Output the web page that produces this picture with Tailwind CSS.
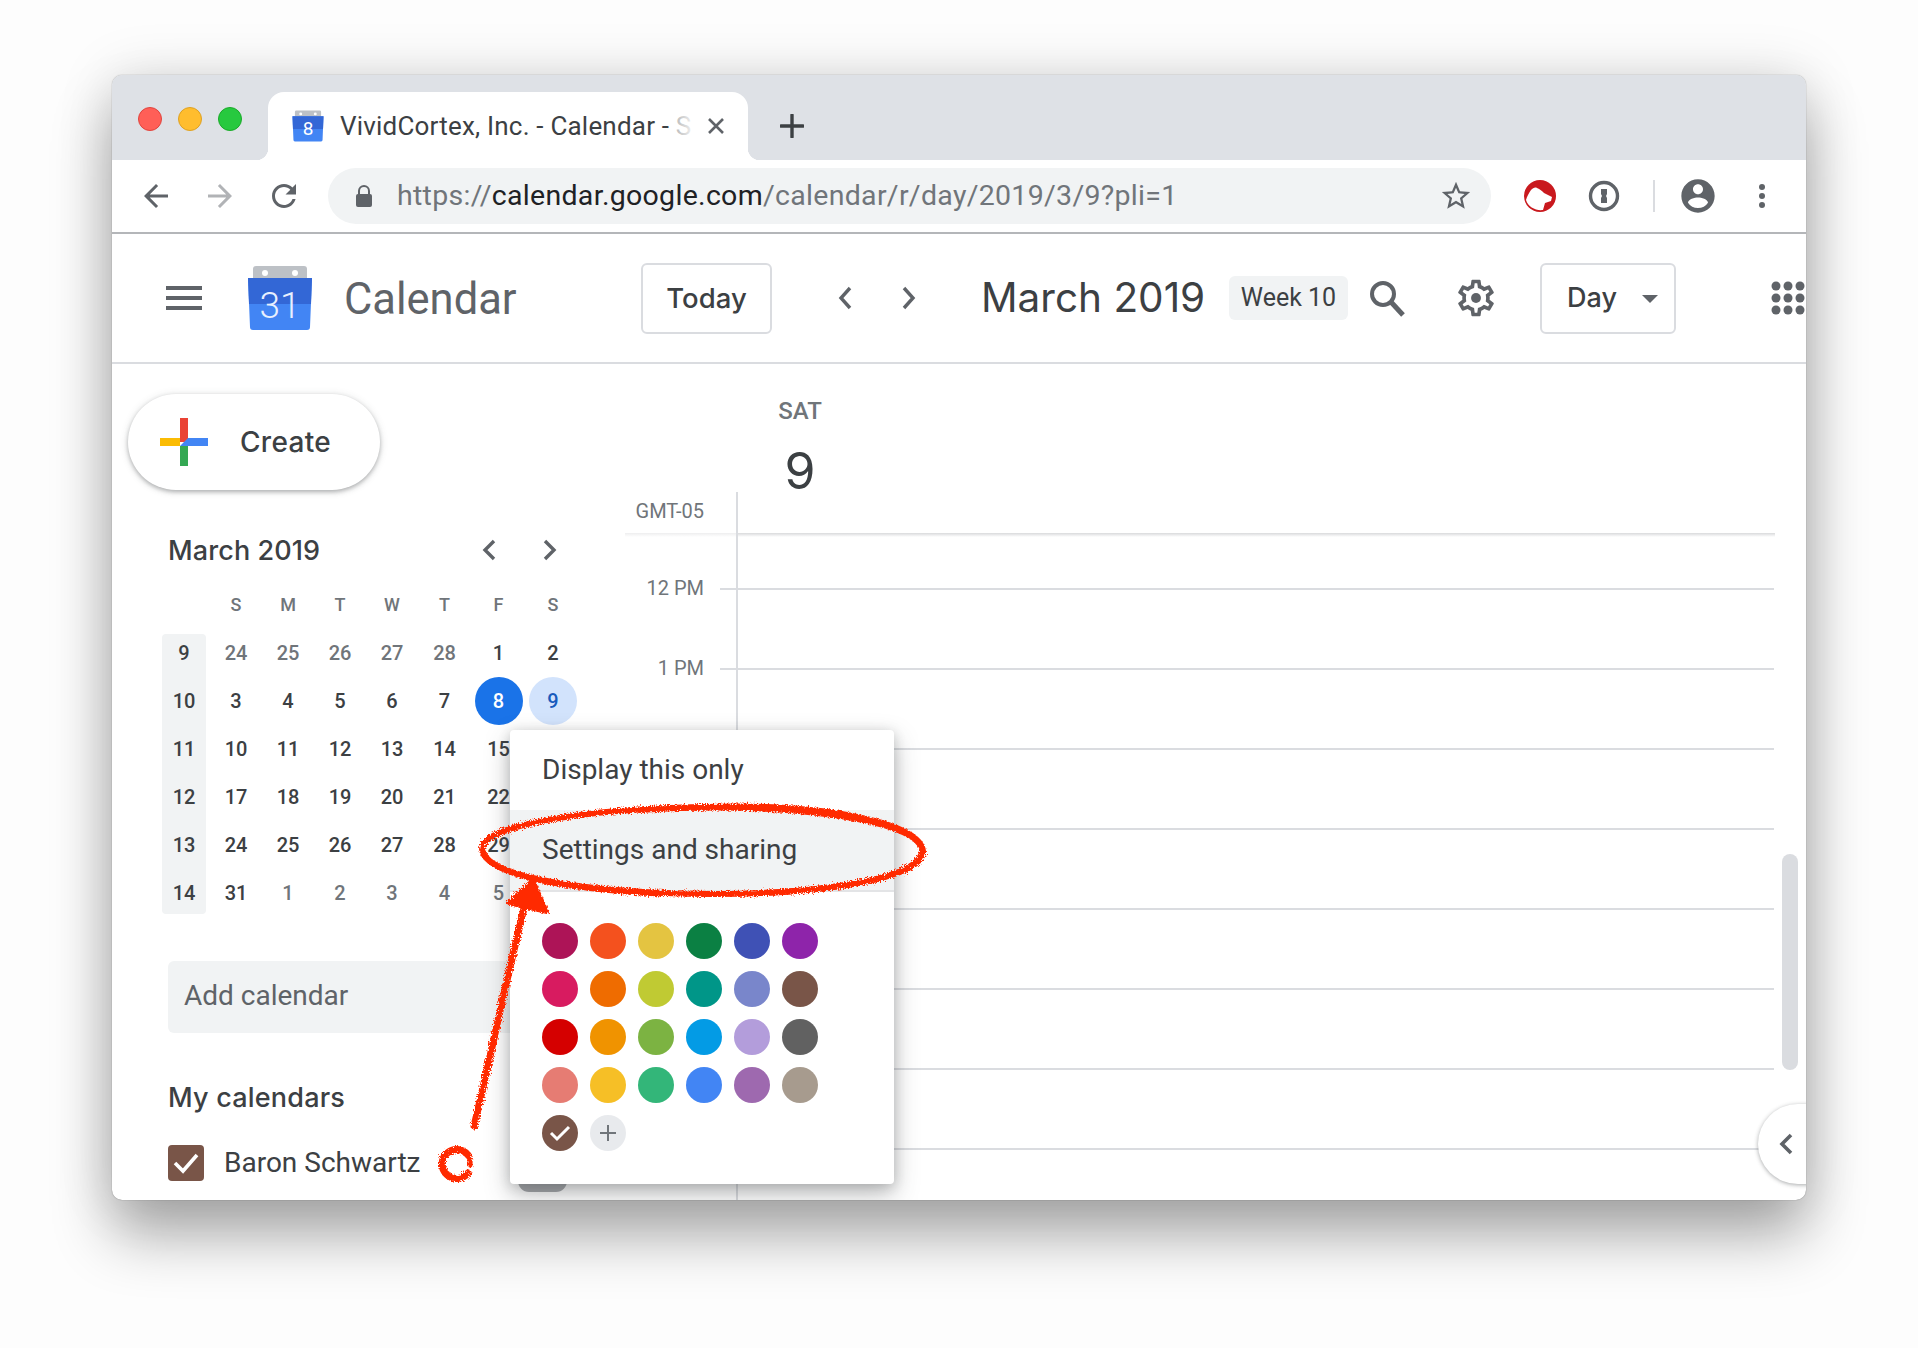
<!DOCTYPE html>
<html lang="en">
<head>
  <meta charset="UTF-8" />
  <title>VividCortex, Inc. - Calendar</title>
  <script src="https://cdn.jsdelivr.net/npm/@tailwindcss/browser@4"></script>
</head>
<body class="relative w-[1918px] h-[1348px] overflow-hidden bg-[#fdfdfd] pl-[112px] pt-[75px] font-['Roboto',sans-serif] text-[#3c4043]">

  <!-- browser window -->
  <div class="relative w-[1694px] h-[1125px] overflow-hidden rounded-[10px] bg-white shadow-[0_0_1px_rgba(0,0,0,.55),0_36px_60px_rgba(0,0,0,.32),0_0_56px_rgba(0,0,0,.13)]">

    <!-- tab strip -->
    <div class="flex h-[85px] bg-[#dee1e6]">
      <div class="flex w-[156px] gap-[16px] pl-[26px] pt-[32px]">
        <span class="h-[24px] w-[24px] rounded-full border border-[#e0443e] bg-[#ff5f57]"></span>
        <span class="h-[24px] w-[24px] rounded-full border border-[#dea123] bg-[#ffbd2e]"></span>
        <span class="h-[24px] w-[24px] rounded-full border border-[#1aab29] bg-[#27c93f]"></span>
      </div>
      <div class="relative mt-[17px] flex h-[68px] w-[480px] items-center rounded-t-[16px] bg-white pl-[24px]">
        <span class="absolute bottom-0 left-[-12px] h-[12px] w-[12px] bg-[radial-gradient(circle_at_0_0,#dee1e6_12px,#fff_12.5px)]"></span>
        <span class="absolute bottom-0 right-[-12px] h-[12px] w-[12px] bg-[radial-gradient(circle_at_100%_0,#dee1e6_12px,#fff_12.5px)]"></span>
        <svg width="32" height="32" viewBox="0 0 66 64" class="shrink-0">
          <path d="M9 0h48q3 0 3 3v10H6V3q0-3 3-3z" fill="#bdc1c6"/>
          <circle cx="18" cy="7" r="3" fill="#fff"/><circle cx="48" cy="7" r="3" fill="#fff"/>
          <path d="M1 12h64l-2 49q0 3-3 3H6q-3 0-3-3z" fill="#4285f4"/>
          <path d="M1 12h64l-1 26H2z" fill="#3367d6"/>
        </svg>
        <span class="relative ml-[-25px] mt-[5px] w-[18px] text-center text-[19px] leading-none text-white">8</span>
        <span class="ml-[23px] whitespace-nowrap text-[26px] tracking-[.2px] text-[#3c4043]">VividCortex, Inc. - Calendar - S</span>
        <span class="absolute left-[405px] top-[14px] h-[40px] w-[24px] bg-gradient-to-r from-white/60 to-white"></span>
        <svg width="20" height="20" viewBox="0 0 20 20" class="absolute left-[438px] top-[24px]"><path d="M3 3l14 14M17 3L3 17" stroke="#5f6368" stroke-width="2.6"/></svg>
      </div>
      <svg width="24" height="24" viewBox="0 0 24 24" class="ml-[32px] mt-[39px]"><path d="M12 1v22M1 12h22" stroke="#3c4043" stroke-width="3.4" stroke-linecap="round"/></svg>
    </div>

    <!-- toolbar -->
    <div class="flex h-[74px] items-center border-b-2 border-[#b4b6b9] pb-[1px]">
      <svg width="36" height="36" viewBox="0 0 24 24" class="ml-[26px]" fill="#5f6368"><path d="M20 11H7.83l5.59-5.59L12 4l-8 8 8 8 1.41-1.41L7.83 13H20v-2z"/></svg>
      <svg width="36" height="36" viewBox="0 0 24 24" class="ml-[28px]" fill="#b1b3b6"><path d="M4 11h12.17l-5.59-5.59L12 4l8 8-8 8-1.41-1.41L16.17 13H4v-2z"/></svg>
      <svg width="36" height="36" viewBox="0 0 24 24" class="ml-[28px]" fill="#5f6368"><path d="M17.65 6.35C16.2 4.9 14.21 4 12 4c-4.42 0-7.99 3.58-7.99 8s3.57 8 7.99 8c3.73 0 6.84-2.55 7.73-6h-2.08c-.82 2.33-3.04 4-5.65 4-3.31 0-6-2.69-6-6s2.69-6 6-6c1.66 0 3.14.69 4.22 1.78L13 11h7V4l-2.35 2.35z"/></svg>
      <div class="ml-[26px] flex h-[56px] w-[1163px] items-center rounded-full bg-[#f1f3f4]">
        <svg width="18" height="22" viewBox="0 0 18 22" class="ml-[27px]" fill="#5f6368"><path d="M3 9V6a6 6 0 0 1 12 0v3h-2V6a4 4 0 0 0-8 0v3z"/><rect x="1" y="9" width="16" height="13" rx="2"/></svg>
        <span class="ml-[24px] whitespace-nowrap pt-[2px] text-[28.5px] leading-none tracking-[.3px] text-[#70757a]">https://<span class="text-[#202124]">calendar.google.com</span>/calendar/r/day/2019/3/9?pli=1</span>
        <svg width="34" height="34" viewBox="0 0 24 24" class="ml-auto mr-[18px]" fill="#5f6368"><path d="M22 9.24l-7.19-.62L12 2 9.19 8.63 2 9.24l5.46 4.73L5.82 21 12 17.27 18.18 21l-1.63-7.03L22 9.24zM12 15.4l-3.76 2.27 1-4.28-3.32-2.88 4.38-.38L12 6.1l1.71 4.04 4.38.38-3.32 2.88 1 4.28L12 15.4z"/></svg>
      </div>
      <svg width="32" height="32" viewBox="0 0 32 32" class="ml-[33px]">
        <circle cx="16" cy="16" r="16" fill="#c9191e"/>
        <path d="M2 20C3 16 5 13 7 10 9 8 11 7 13 8 16 9 18 11 20 13L28 17 27 21 21 23 19 30C12 31 4 27 2 20z" fill="#fff"/>
      </svg>
      <svg width="32" height="32" viewBox="0 0 32 32" class="ml-[32px]" fill="none"><circle cx="16" cy="16" r="13.5" stroke="#5f6368" stroke-width="3.4"/><path d="M13 9h6v5l-1 2 1 2v5h-6v-5l1-2-1-2z" fill="#5f6368"/></svg>
      <span class="ml-[33px] h-[32px] w-[2px] bg-[#dadce0]"></span>
      <svg width="40" height="40" viewBox="0 0 24 24" class="ml-[23px]" fill="#5f6368"><path d="M12 2C6.48 2 2 6.48 2 12s4.48 10 10 10 10-4.48 10-10S17.52 2 12 2zm0 3c1.66 0 3 1.34 3 3s-1.34 3-3 3-3-1.34-3-3 1.34-3 3-3zm0 14.2c-2.5 0-4.71-1.28-6-3.22.03-1.99 4-3.08 6-3.08 1.99 0 5.97 1.09 6 3.08-1.29 1.94-3.5 3.22-6 3.22z"/></svg>
      <svg width="8" height="26" viewBox="0 0 8 26" class="ml-[40px]" fill="#5f6368"><circle cx="4" cy="4" r="3"/><circle cx="4" cy="13" r="3"/><circle cx="4" cy="22" r="3"/></svg>
    </div>

    <!-- calendar header -->
    <header class="flex h-[130px] items-center border-b-2 border-[#dadce0]">
      <svg width="36" height="24" viewBox="0 0 36 24" class="ml-[54px] shrink-0" fill="#5f6368"><rect width="36" height="4"/><rect y="10" width="36" height="4"/><rect y="20" width="36" height="4"/></svg>
      <div class="relative ml-[45px] h-[64px] w-[66px] shrink-0">
        <svg width="66" height="64" viewBox="0 0 66 64">
          <path d="M9 0h48q3 0 3 3v10H6V3q0-3 3-3z" fill="#bdc1c6"/>
          <circle cx="18" cy="7" r="3" fill="#fff"/><circle cx="48" cy="7" r="3" fill="#fff"/>
          <path d="M1 12h64l-2 49q0 3-3 3H6q-3 0-3-3z" fill="#4285f4"/>
          <path d="M1 12h64l-1 26H2z" fill="#3367d6"/>
        </svg>
        <span class="absolute left-0 top-[21px] w-full text-center text-[37px] font-light leading-none text-[#e8f0fe]">31</span>
      </div>
      <span class="ml-[31px] mt-[4px] w-[172px] shrink-0 whitespace-nowrap text-[43.5px] leading-none text-[#5f6368]">Calendar</span>
      <button class="ml-[125px] h-[71px] w-[131px] shrink-0 rounded-[6px] border-2 border-[#dadce0] pt-[1px] font-['Inter',sans-serif] text-[27.500px] font-medium">Today</button>
      <svg width="20" height="28" viewBox="0 0 20 28" class="ml-[63px] shrink-0" fill="none" stroke="#5f6368" stroke-width="3.4"><path d="M15 4L6 14l9 10"/></svg>
      <svg width="20" height="28" viewBox="0 0 20 28" class="ml-[44px] shrink-0" fill="none" stroke="#5f6368" stroke-width="3.4"><path d="M5 4l9 10-9 10"/></svg>
      <span class="ml-[62px] w-[226px] shrink-0 whitespace-nowrap font-['Inter',sans-serif] text-[40.5px] leading-none">March 2019</span>
      <span class="ml-[22px] flex h-[44px] w-[119px] shrink-0 items-center justify-center rounded-[6px] bg-[#f1f3f4] text-[25px]">Week 10</span>
      <svg width="38" height="38" viewBox="0 0 38 38" class="ml-[20px] shrink-0" fill="none" stroke="#5f6368"><circle cx="15" cy="15" r="11" stroke-width="4"/><path d="M23 23l12 13" stroke-width="5"/></svg>
      <svg width="44" height="44" viewBox="0 0 24 24" class="ml-[48px] shrink-0" fill="#5f6368"><path d="M19.43 12.98c.04-.32.07-.64.07-.98 0-.34-.03-.66-.07-.98l2.11-1.65c.19-.15.24-.42.12-.64l-2-3.46c-.09-.16-.26-.25-.44-.25-.06 0-.12.01-.17.03l-2.49 1c-.52-.4-1.08-.73-1.69-.98l-.38-2.65C14.46 2.18 14.25 2 14 2h-4c-.25 0-.46.18-.49.42l-.38 2.65c-.61.25-1.17.59-1.69.98l-2.49-1c-.06-.02-.12-.03-.18-.03-.17 0-.34.09-.43.25l-2 3.46c-.13.22-.07.49.12.64l2.11 1.65c-.04.32-.07.65-.07.98 0 .33.03.66.07.98l-2.11 1.65c-.19.15-.24.42-.12.64l2 3.46c.09.16.26.25.44.25.06 0 .12-.01.17-.03l2.49-1c.52.4 1.08.73 1.69.98l.38 2.65c.03.24.24.42.49.42h4c.25 0 .46-.18.49-.42l.38-2.65c.61-.25 1.17-.59 1.69-.98l2.49 1c.06.02.12.03.18.03.17 0 .34-.09.43-.25l2-3.46c.12-.22.07-.49-.12-.64l-2.11-1.65zm-1.98-1.71c.04.31.05.52.05.73 0 .21-.02.43-.05.73l-.14 1.13.89.7 1.08.84-.7 1.21-1.27-.51-1.04-.42-.9.68c-.43.32-.84.56-1.25.73l-1.06.43-.16 1.13-.2 1.35h-1.4l-.19-1.35-.16-1.13-1.06-.43c-.43-.18-.83-.41-1.23-.71l-.91-.7-1.06.43-1.27.51-.7-1.21 1.08-.84.89-.7-.14-1.13c-.03-.31-.05-.54-.05-.74s.02-.43.05-.73l.14-1.13-.89-.7-1.08-.84.7-1.21 1.27.51 1.04.42.9-.68c.43-.32.84-.56 1.25-.73l1.06-.43.16-1.13.2-1.35h1.39l.19 1.35.16 1.13 1.06.43c.43.18.83.41 1.23.71l.91.7 1.06-.43 1.27-.51.7 1.21-1.07.85-.89.7.14 1.13z"/><circle cx="12" cy="12" r="2.7"/></svg>
      <button class="ml-[42px] flex h-[71px] w-[136px] shrink-0 items-center rounded-[6px] border-2 border-[#dadce0] pl-[25px] pt-[1px] font-['Inter',sans-serif] text-[27px] font-medium">Day<span class="ml-auto mr-[16px] h-0 w-0 border-x-[8px] border-t-[8px] border-x-transparent border-t-[#5f6368]"></span></button>
      <svg width="34" height="34" viewBox="0 0 34 34" class="ml-[95px] shrink-0" fill="#5f6368"><circle cx="5" cy="5" r="4.5"/><circle cx="17" cy="5" r="4.5"/><circle cx="29" cy="5" r="4.5"/><circle cx="5" cy="17" r="4.5"/><circle cx="17" cy="17" r="4.5"/><circle cx="29" cy="17" r="4.5"/><circle cx="5" cy="29" r="4.5"/><circle cx="17" cy="29" r="4.5"/><circle cx="29" cy="29" r="4.5"/></svg>
    </header>

    <div class="flex">
      <!-- sidebar -->
      <aside class="w-[508px] shrink-0 pl-[16px]">
        <button class="mt-[30px] flex h-[96px] w-[252px] items-center rounded-full bg-white pl-[32px] shadow-[0_2px_4px_rgba(60,64,67,.35),0_1px_8px_rgba(60,64,67,.15)]">
          <svg width="48" height="48" viewBox="0 0 48 48"><rect x="20" width="8" height="24" fill="#ea4335"/><rect x="28" y="20" width="20" height="8" fill="#4285f4"/><rect x="20" y="28" width="8" height="20" fill="#34a853"/><rect y="20" width="20" height="8" fill="#fbbc04"/><path d="M20 28l8-8v8z" fill="#4285f4"/></svg>
          <span class="ml-[32px] font-['Inter',sans-serif] text-[28px] font-medium tracking-[.3px]">Create</span>
        </button>
        <div class="ml-[40px] mt-[40px] flex h-[40px] w-[392px] items-center">
          <span class="font-['Inter',sans-serif] text-[27px] font-medium leading-none tracking-[.1px]">March 2019</span>
          <svg width="20" height="26" viewBox="0 0 20 26" class="ml-auto" fill="none" stroke="#5f6368" stroke-width="3.4"><path d="M15 4l-9 9 9 9"/></svg>
          <svg width="20" height="26" viewBox="0 0 20 26" class="ml-[41px]" fill="none" stroke="#5f6368" stroke-width="3.4"><path d="M5 4l9 9-9 9"/></svg>
        </div>
        <div id="mini" class="ml-[34px] mt-[11px] grid w-[420px] grid-cols-[48px_52px_52px_52px_52px_53px_55px_54px] grid-rows-[48px_48px_48px_48px_48px_48px_48px] text-[20px] font-medium"></div>
        <div class="ml-[40px] mt-[44px] flex h-[72px] w-[400px] items-center rounded-[6px] bg-[#f1f3f4] pb-[2px] pl-[16px] text-[28px] leading-none text-[#5f6368]">Add calendar</div>
        <div class="ml-[40px] mt-[44px] flex h-[40px] items-center font-['Inter',sans-serif] text-[27px] font-medium leading-none tracking-[.2px]">My calendars</div>
        <div class="ml-[40px] mt-[28px] flex items-center leading-none">
          <span class="flex h-[36px] w-[36px] items-center justify-center rounded-[4px] bg-[#795548]">
            <svg width="26" height="22" viewBox="0 0 26 22" fill="none" stroke="#fff" stroke-width="3.6"><path d="M2 11l8 8L24 3"/></svg>
          </span>
          <span class="ml-[20px] text-[28px]">Baron Schwartz</span>
        </div>
      </aside>

      <!-- day view -->
      <main class="relative flex-1">
        <div class="h-[128px] pl-[117px]">
          <div class="flex w-[126px] flex-col items-center">
            <span class="mt-[35px] text-[24px] font-medium leading-none text-[#70757a]">SAT</span>
            <span class="mt-[23px] font-['Inter',sans-serif] text-[50px] leading-none">9</span>
          </div>
        </div>
        <div class="flex h-[41px] items-center"><span class="w-[84px] pb-[3px] text-right text-[20px] leading-none text-[#70757a]">GMT-05</span></div>
        <div class="ml-[5px] flex w-[1150px]">
          <span class="h-[4px] w-[112px] bg-gradient-to-b from-[#eeeeef] to-white"></span>
          <span class="h-[4px] flex-1 bg-gradient-to-b from-[#d9dadc] to-white"></span>
        </div>
        <div class="mt-[12px]" id="hours"></div>
        <span class="absolute left-[116px] top-[128px] h-[800px] w-[2px] bg-[#dadce0]"></span>
        <span class="absolute left-[1162px] top-[490px] h-[216px] w-[16px] rounded-full bg-[#dadce0]"></span>
        <div class="absolute left-[1138px] top-[740px] flex h-[80px] w-[60px] items-center rounded-l-[40px] bg-white pl-[18px] shadow-[0_1px_4px_rgba(60,64,67,.45)]">
          <svg width="20" height="26" viewBox="0 0 20 26" fill="none" stroke="#5f6368" stroke-width="3.6"><path d="M15 4l-9 9 9 9"/></svg>
        </div>
      </main>
    </div>

    <span class="absolute left-[406px] top-[1095px] h-[22px] w-[49px] rounded-[12px] bg-[#a5a7aa]"></span>

    <!-- calendar options menu -->
    <div class="absolute left-[398px] top-[655px] h-[454px] w-[384px] rounded-[4px] bg-white shadow-[0_10px_24px_rgba(60,64,67,.35),0_2px_12px_rgba(60,64,67,.2)]">
      <div class="flex h-[80px] items-center pl-[32px] text-[28px]">Display this only</div>
      <div class="flex h-[80px] items-center bg-[#f1f3f4] pl-[32px] text-[28px]">Settings and sharing</div>
      <div class="h-[2px] bg-[#e3e4e6]"></div>
      <div id="swatches" class="ml-[32px] mt-[31px] grid w-[288px] grid-cols-6 gap-y-[12px]"></div>
    </div>
  </div>

  <!-- red pencil annotation -->
  <svg class="pointer-events-none absolute left-0 top-0" width="1918" height="1348" viewBox="0 0 1918 1348" fill="none">
    <defs>
      <filter id="rough" x="-5%" y="-5%" width="110%" height="110%">
        <feTurbulence type="fractalNoise" baseFrequency=".7" numOctaves="2" seed="4"/>
        <feDisplacementMap in="SourceGraphic" scale="6"/>
      </filter>
    </defs>
    <g filter="url(#rough)" stroke="#ff2a00" stroke-linecap="round" stroke-linejoin="round">
      <path d="M705 807C830 803 920 824 923 851 924 877 830 894 712 894 590 893 484 878 482 849 482 826 580 809 705 807z" stroke-width="6"/>
      <path d="M640 810C790 801 918 820 922 850 922 875 850 889 760 893" stroke-width="6"/>
      <path d="M484 852C490 875 560 889 660 894" stroke-width="5"/>
      <path d="M474 1126C490 1060 510 960 530 885" stroke-width="7"/>
      <path d="M533 880L508 903 547 912z" fill="#ff2a00" stroke-width="4"/>
      <path d="M468 1155A14.500 14.500 0 1 0 468 1173" stroke-width="7"/>
      <path d="M468 1155A14.500 14.500 0 0 1 470 1165" stroke-width="5"/>
    </g>
  </svg>

  <script>
    const heads = ['', 'S', 'M', 'T', 'W', 'T', 'F', 'S'];
    const rows = [
      [9, 24, 25, 26, 27, 28, 1, 2],
      [10, 3, 4, 5, 6, 7, 8, 9],
      [11, 10, 11, 12, 13, 14, 15, 16],
      [12, 17, 18, 19, 20, 21, 22, 23],
      [13, 24, 25, 26, 27, 28, 29, 30],
      [14, 31, 1, 2, 3, 4, 5, 6]
    ];
    const mini = document.getElementById('mini');
    let html = heads.map(h => `<div class="flex items-center justify-center pb-[2px] text-[18px] text-[#70757a]">${h}</div>`).join('');
    rows.forEach((r, i) => {
      r.forEach((d, j) => {
        if (j === 0) {
          const extra = i === 0 ? 'mt-[5px] rounded-t-[4px] pb-[5px]' : i === 5 ? 'mb-[3px] rounded-b-[4px] pt-[3px]' : '';
          html += `<div class="mr-[4px] flex items-center justify-center bg-[#f1f3f4] ${extra}">${d}</div>`;
        } else if (i === 1 && j === 6) {
          html += `<div class="flex items-center justify-center"><span class="flex h-[48px] w-[48px] items-center justify-center rounded-full bg-[#1a73e8] text-white">${d}</span></div>`;
        } else if (i === 1 && j === 7) {
          html += `<div class="flex items-center justify-center"><span class="flex h-[48px] w-[48px] items-center justify-center rounded-full bg-[#d2e3fc] text-[#185abc]">${d}</span></div>`;
        } else {
          const muted = (i === 0 && j < 6) || (i === 5 && j > 1);
          html += `<div class="flex items-center justify-center ${muted ? 'text-[#70757a]' : 'text-[#3c4043]'}">${d}</div>`;
        }
      });
    });
    mini.innerHTML = html;

    const hours = ['12 PM', '1 PM', '', '', '', '', '', ''];
    document.getElementById('hours').innerHTML = hours.map(h => `
      <div class="flex h-[80px] items-center">
        <span class="w-[84px] pb-[2px] text-right text-[20px] leading-none text-[#70757a]">${h}</span>
        <span class="ml-[16px] h-[2px] w-[1054px] bg-[#dadce0]"></span>
      </div>`).join('');

    const colours = [
      '#ad1457', '#f4511e', '#e4c441', '#0b8043', '#3f51b5', '#8e24aa',
      '#d81b60', '#ef6c00', '#c0ca33', '#009688', '#7986cb', '#795548',
      '#d50000', '#f09300', '#7cb342', '#039be5', '#b39ddb', '#616161',
      '#e67c73', '#f6bf26', '#33b679', '#4285f4', '#9e69af', '#a79b8e'
    ];
    let sw = colours.map(c => `<span class="h-[36px] w-[36px] rounded-full" style="background:${c}"></span>`).join('');
    sw += `<span class="flex h-[36px] w-[36px] items-center justify-center rounded-full bg-[#795548]"><svg width="22" height="18" viewBox="0 0 22 18" fill="none" stroke="#fff" stroke-width="3"><path d="M2 9l6 6L20 3"/></svg></span>`;
    sw += `<span class="flex h-[36px] w-[36px] items-center justify-center rounded-full bg-[#e8eaed]"><svg width="18" height="18" viewBox="0 0 18 18" fill="none" stroke="#70757a" stroke-width="2"><path d="M9 1v16M1 9h16"/></svg></span>`;
    document.getElementById('swatches').innerHTML = sw;
  </script>
</body>
</html>
